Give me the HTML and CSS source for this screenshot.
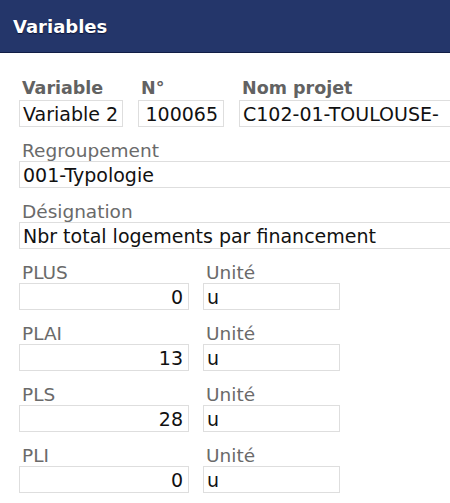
FILE: index.html
```html
<!DOCTYPE html>
<html lang="fr">
<head>
<meta charset="utf-8">
<title>Variables</title>
<link rel="stylesheet" href="styles.css">
</head>
<body>
<div class="page">
  <header class="header"><h1 class="title">Variables</h1></header>
  <main class="content">
    <div class="row row-top">
      <div class="field f-var">
        <div class="label label-bold">Variable</div>
        <div class="box">Variable 2</div>
      </div>
      <div class="field f-num">
        <div class="label label-bold">N°</div>
        <div class="box num">100065</div>
      </div>
      <div class="field f-proj">
        <div class="label label-bold">Nom projet</div>
        <div class="box">C102-01-TOULOUSE-</div>
      </div>
    </div>
    <div class="field wide">
      <div class="label">Regroupement</div>
      <div class="box">001-Typologie</div>
    </div>
    <div class="field wide">
      <div class="label">Désignation</div>
      <div class="box">Nbr total logements par financement</div>
    </div>
    <div class="row pair">
      <div class="field f-val"><div class="label">PLUS</div><div class="box num">0</div></div>
      <div class="field f-unit"><div class="label">Unité</div><div class="box">u</div></div>
    </div>
    <div class="row pair">
      <div class="field f-val"><div class="label">PLAI</div><div class="box num">13</div></div>
      <div class="field f-unit"><div class="label">Unité</div><div class="box">u</div></div>
    </div>
    <div class="row pair">
      <div class="field f-val"><div class="label">PLS</div><div class="box num">28</div></div>
      <div class="field f-unit"><div class="label">Unité</div><div class="box">u</div></div>
    </div>
    <div class="row pair">
      <div class="field f-val"><div class="label">PLI</div><div class="box num">0</div></div>
      <div class="field f-unit"><div class="label">Unité</div><div class="box">u</div></div>
    </div>
  </main>
</div>
</body>
</html>
```
FILE: styles.css
```css
html, body {
  margin: 0;
  padding: 0;
  background: #ffffff;
  overflow: hidden;
}
body {
  font-family: "DejaVu Sans", "Liberation Sans", sans-serif;
  font-size: 19px;
  color: #111111;
}
.page {
  width: 450px;
  height: 503px;
  overflow: hidden;
}
.header {
  height: 52px;
  background: #24366a;
  border-bottom: 1px solid #111d45;
  display: flex;
  align-items: center;
  padding-left: 13px;
}
.title {
  margin: 0;
  font-size: 18px;
  font-weight: bold;
  color: #ffffff;
  text-shadow: 0 1px 1px #0d1433;
}
.content {
  padding: 23px 0 0 19px;
  width: 600px;
}
.row {
  display: flex;
  gap: 15px;
}
.row-top .label {
  line-height: 24px;
}
.field {
  margin-top: 13px;
}
.row-top .field {
  margin-top: 0;
}
.label {
  font-size: 18.5px;
  line-height: 21px;
  padding-left: 3px;
  color: #6a6a6a;
  white-space: nowrap;
}
.label-bold {
  font-size: 17.5px;
  font-weight: bold;
  color: #626262;
}
.box {
  box-sizing: border-box;
  height: 27px;
  line-height: 23px;
  border: 1px solid #dedede;
  padding: 2px 3px 0;
  white-space: nowrap;
  overflow: hidden;
  background: #ffffff;
}
.num {
  text-align: right;
  padding-right: 5px;
}
.f-var { width: 104px; }
.f-num { width: 86px; }
.f-proj { width: 300px; }
.wide { width: 500px; }
.pair { gap: 14px; }
.f-val { width: 170px; }
.f-unit { width: 137px; }
```
